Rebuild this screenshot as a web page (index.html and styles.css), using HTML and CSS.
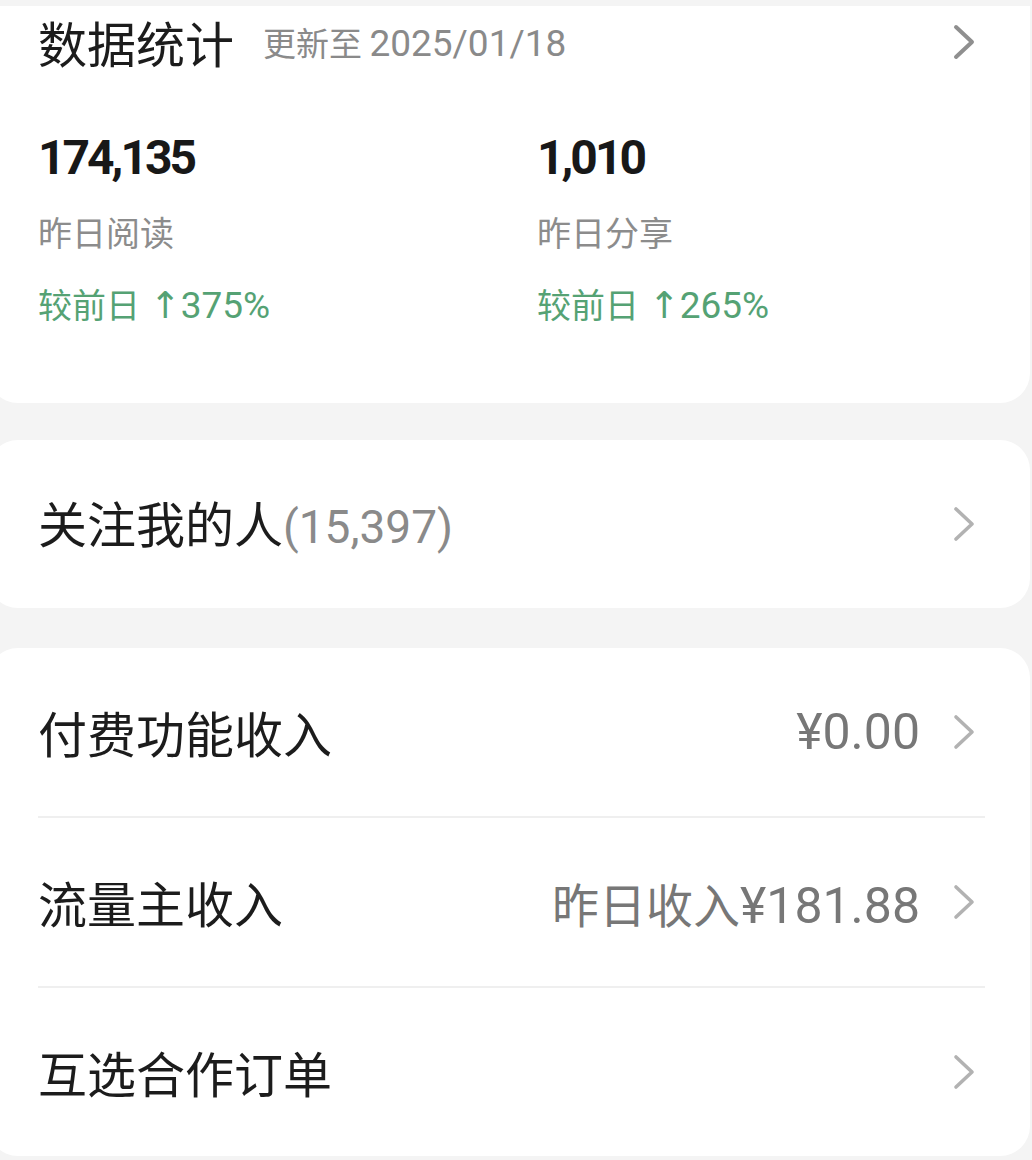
FILE: index.html
```html
<!DOCTYPE html>
<html lang="zh-CN">
<head>
<meta charset="utf-8">
<link rel="stylesheet" href="styles.css">
</head>
<body>
<div class="page">
  <section class="card stats-card">
    <div class="stats-head">
      <div class="head-left">
        <span class="title">数据统计</span>
        <span class="date">更新至 <span class="date-num">2025/01/18</span></span>
      </div>
      <svg class="chev chev-dark" viewBox="0 0 24 36"><polyline points="4,3 20,18 4,33"/></svg>
    </div>
    <div class="stats-grid">
      <div class="stat">
        <div class="num">174,135</div>
        <div class="label">昨日阅读</div>
        <div class="change">较前日 <span class="arrow">↑</span><span class="pct">375%</span></div>
      </div>
      <div class="stat">
        <div class="num">1,010</div>
        <div class="label">昨日分享</div>
        <div class="change">较前日 <span class="arrow">↑</span><span class="pct">265%</span></div>
      </div>
    </div>
  </section>

  <section class="card">
    <div class="row">
      <div class="row-title">关注我的人<span class="count">(15,397)</span></div>
      <svg class="chev" viewBox="0 0 24 36"><polyline points="4,3 20,18 4,33"/></svg>
    </div>
  </section>

  <section class="card">
    <div class="row">
      <div class="row-title">付费功能收入</div>
      <div class="row-right">
        <span class="value">¥0.00</span>
        <svg class="chev" viewBox="0 0 24 36"><polyline points="4,3 20,18 4,33"/></svg>
      </div>
    </div>
    <div class="divider"></div>
    <div class="row">
      <div class="row-title">流量主收入</div>
      <div class="row-right">
        <span class="value"><span class="cjk">昨日收入</span>¥181.88</span>
        <svg class="chev" viewBox="0 0 24 36"><polyline points="4,3 20,18 4,33"/></svg>
      </div>
    </div>
    <div class="divider"></div>
    <div class="row">
      <div class="row-title">互选合作订单</div>
      <svg class="chev" viewBox="0 0 24 36"><polyline points="4,3 20,18 4,33"/></svg>
    </div>
  </section>
</div>
</body>
</html>
```

FILE: styles.css
```css
* { box-sizing: border-box; }

html, body {
  margin: 0;
  padding: 0;
  background: #f4f4f4;
}

body {
  width: 1032px;
  height: 1160px;
  overflow: hidden;
  font-family: "Noto Sans CJK SC", "Noto Sans", sans-serif;
  color: #1c1c1c;
}

.page {
  padding-top: 6px;
  display: flex;
  flex-direction: column;
  gap: 37px;
}

.card {
  background: #ffffff;
  border-radius: 30px;
  margin-left: -12px;
  width: 1042px;
  padding-left: 50px;
  padding-right: 54px;
}

.card + .card + .card { margin-top: 3px; }

.stats-card {
  border-top-left-radius: 0;
  border-top-right-radius: 0;
  height: 397px;
}

.stats-head {
  height: 72px;
  display: flex;
  align-items: center;
  justify-content: space-between;
}

.head-left {
  display: flex;
  align-items: center;
  gap: 29px;
}

.title {
  font-size: 49px;
  line-height: 72px;
  color: #1c1c1c;
}

.date {
  font-size: 33px;
  color: #8a8a8a;
}

.date-num {
  font-family: "Roboto", sans-serif;
  font-size: 37px;
}

.stats-grid {
  display: grid;
  grid-template-columns: 499px 1fr;
  margin-top: 50px;
}

.num {
  font-family: "Roboto", sans-serif;
  font-weight: 700;
  font-size: 48px;
  letter-spacing: -3px;
  line-height: 60px;
  color: #181818;
}

.label {
  margin-top: 22px;
  font-size: 34px;
  line-height: 44px;
  color: #8c8c8c;
}

.change {
  margin-top: 28px;
  font-size: 34px;
  line-height: 44px;
  height: 44px;
  color: #55a274;
  white-space: pre;
}

.arrow {
  font-family: "DejaVu Sans", sans-serif;
  font-size: 37px;
  line-height: 44px;
  margin-left: 2px;
}

.pct {
  font-family: "Roboto", sans-serif;
  font-size: 37px;
}

.row {
  height: 168px;
  display: flex;
  align-items: center;
  justify-content: space-between;
}

.row-title {
  font-size: 49px;
  line-height: 60px;
  color: #1c1c1c;
}

.count {
  font-family: "Roboto", sans-serif;
  font-size: 46px;
  color: #8a8a8a;
}

.row-right {
  display: flex;
  align-items: center;
  gap: 32px;
}

.value {
  font-family: "Roboto", sans-serif;
  font-size: 50px;
  color: #777777;
}

.value .cjk {
  font-family: "Noto Sans CJK SC", sans-serif;
  font-size: 47px;
}

.divider {
  height: 2px;
  background: #efefef;
  margin-right: -9px;
}

.chev {
  width: 24px;
  height: 36px;
  flex: none;
}

.chev polyline {
  fill: none;
  stroke: #b2b2b2;
  stroke-width: 3.6;
  stroke-linecap: round;
  stroke-linejoin: round;
}

.chev-dark polyline { stroke: #8f8f8f; stroke-width: 4; }
```
